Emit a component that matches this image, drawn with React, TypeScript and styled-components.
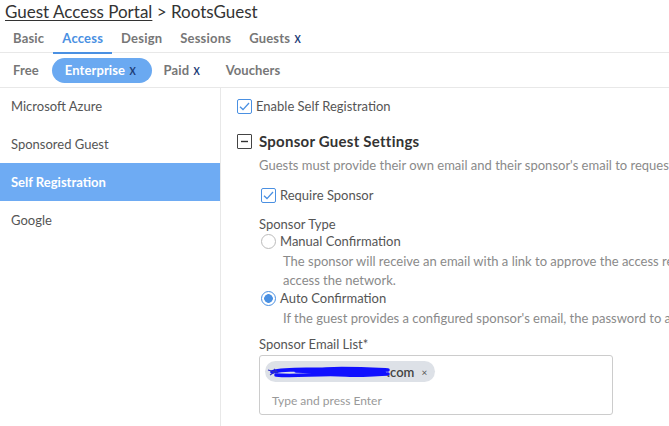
import React from "react";
import styled, { createGlobalStyle } from "styled-components";

const GlobalStyle = createGlobalStyle`
  html, body {
    margin: 0;
    padding: 0;
    background: #ffffff;
    font-family: Lato, "Open Sans", sans-serif;
    color: #444;
    overflow: hidden;
  }
`;

const primaryTabs = ["Basic", "Access", "Design", "Sessions", "Guests"];
const accessTabs = [
  { label: "Free", flagged: false },
  { label: "Enterprise", flagged: true },
  { label: "Paid", flagged: true },
  { label: "Vouchers", flagged: false },
];
const providers = ["Microsoft Azure", "Sponsored Guest", "Self Registration", "Google"];

const Check = () => (
  <svg width="11" height="9" viewBox="0 0 11 9">
    <path d="M1 4.8 L4 7.6 L10 1" fill="none" stroke="#4a90e2" strokeWidth="1.3" />
  </svg>
);

// redacted address, scribbled over in the screenshot
const Scribble = () => (
  <svg width="124" height="18" viewBox="0 0 124 18">
    <path
      d="M6 9 C20 5 40 7 60 6 C80 5 100 6 122 7 M10 12 C30 14 55 10 80 12 C95 13 110 11 122 11 M30 8 C55 9 85 8 118 9"
      fill="none"
      stroke="#1010ff"
      strokeWidth="3.6"
      strokeLinecap="round"
    />
    <path d="M2 7 L9 9 L4 12 M8 6 L12 10" fill="none" stroke="#2f2fc0" strokeWidth="1.1" />
  </svg>
);

export default function App() {
  return (
    <>
      <GlobalStyle />
      <Page>
        <Breadcrumb>
          <CrumbLink>Guest Access Portal</CrumbLink> &gt; RootsGuest
        </Breadcrumb>
        <TabBar>
          {primaryTabs.map((t) => (
            <Tab key={t} $active={t === "Access"}>
              {t}
              {t === "Guests" && <XMark>X</XMark>}
            </Tab>
          ))}
        </TabBar>
        <PillBar>
          {accessTabs.map((t) => (
            <Pill key={t.label} $active={t.label === "Enterprise"}>
              {t.label}
              {t.flagged && <XMark>X</XMark>}
            </Pill>
          ))}
        </PillBar>
        <Body>
          <Sidebar>
            {providers.map((p) => (
              <SideItem key={p} $active={p === "Self Registration"}>
                {p}
              </SideItem>
            ))}
          </Sidebar>
          <Content>
            <CheckRow>
              <CheckBox>
                <Check />
              </CheckBox>
              Enable Self Registration
            </CheckRow>
            <SectionHead>
              <Collapse>
                <svg width="11" height="11" viewBox="0 0 11 11">
                  <path d="M2 5.5 H9" stroke="#333" strokeWidth="1.4" />
                </svg>
              </Collapse>
              Sponsor Guest Settings
            </SectionHead>
            <Section>
              <Hint>Guests must provide their own email and their sponsor's email to request access.</Hint>
              <CheckRow $tight>
                <CheckBox>
                  <Check />
                </CheckBox>
                Require Sponsor
              </CheckRow>
              <FieldLabel>Sponsor Type</FieldLabel>
              <RadioRow>
                <Radio />
                Manual Confirmation
              </RadioRow>
              <RadioHint>
                The sponsor will receive an email with a link to approve the access request before the guest can
                access the network.
              </RadioHint>
              <RadioRow>
                <Radio $checked />
                Auto Confirmation
              </RadioRow>
              <RadioHint>
                If the guest provides a configured sponsor's email, the password to access the network is sent.
              </RadioHint>
              <FieldLabel $gap>Sponsor Email List*</FieldLabel>
              <TagInput>
                <Chip>
                  <Scribble />
                  <ChipText>.com</ChipText>
                  <ChipClose>×</ChipClose>
                </Chip>
                <Placeholder>Type and press Enter</Placeholder>
              </TagInput>
            </Section>
          </Content>
        </Body>
      </Page>
    </>
  );
}

const Page = styled.div`
  width: 669px;
  height: 426px;
  display: flex;
  flex-direction: column;
`;

const Breadcrumb = styled.div`
  font-size: 17px;
  color: #333;
  padding: 2px 0 0 5px;
  height: 22px;
  line-height: 20px;
`;

const CrumbLink = styled.span`
  text-decoration: underline;
  text-underline-offset: 2px;
  text-decoration-thickness: 1px;
`;

const TabBar = styled.div`
  display: flex;
  border-bottom: 1px solid #e8e8e8;
  height: 28px;
  padding-left: 4px;
`;

const Tab = styled.div<{ $active?: boolean }>`
  font-size: 13px;
  font-weight: 700;
  letter-spacing: 0.2px;
  color: ${(p) => (p.$active ? "#4a90e2" : "#777")};
  padding: 6px 9px 0;
  height: 22px;
  border-bottom: 2px solid ${(p) => (p.$active ? "#4a90e2" : "transparent")};
  margin-bottom: -1px;
  line-height: 16px;
`;

const XMark = styled.span`
  font-size: 11px;
  font-weight: 700;
  color: #1d3c78;
  margin-left: 4px;
  transform: scaleX(0.85);
  display: inline-block;
`;

const PillBar = styled.div`
  display: flex;
  align-items: center;
  padding-left: 1px;
  height: 34px;
  border-bottom: 1px solid #e8e8e8;
`;

const Pill = styled.div<{ $active?: boolean }>`
  font-size: 13px;
  font-weight: 700;
  letter-spacing: 0.1px;
  color: ${(p) => (p.$active ? "#ffffff" : "#777")};
  background: ${(p) => (p.$active ? "#6aa9f1" : "transparent")};
  border-radius: 13px;
  padding: ${(p) => (p.$active ? "0 15px 0 13px" : "0 13px 0 12px")};
  height: 25px;
  line-height: 25px;
`;

const Body = styled.div`
  display: flex;
  flex: 1;
  min-height: 0;
`;

const Sidebar = styled.div`
  width: 220px;
  border-right: 1px solid #e8e8e8;
  flex-shrink: 0;
`;

const SideItem = styled.div<{ $active?: boolean }>`
  height: 38px;
  line-height: 38px;
  padding-left: 11px;
  font-size: 13px;
  font-weight: ${(p) => (p.$active ? 700 : 400)};
  color: ${(p) => (p.$active ? "#ffffff" : "#555")};
  background: ${(p) => (p.$active ? "#6eabf3" : "transparent")};
  &:first-child {
    height: 37px;
    line-height: 37px;
  }
`;

const Content = styled.div`
  flex: 1;
  padding: 10px 0 0 16px;
  white-space: nowrap;
  overflow: hidden;
`;

const CheckRow = styled.div<{ $tight?: boolean }>`
  display: flex;
  align-items: center;
  gap: 4px;
  font-size: 13px;
  color: #555;
  margin: ${(p) => (p.$tight ? "0 0 0 2px" : "0")};
  height: 16px;
`;

const CheckBox = styled.span`
  width: 13px;
  height: 13px;
  border: 1px solid #4a90e2;
  border-radius: 2px;
  display: inline-flex;
  align-items: center;
  justify-content: center;
  flex-shrink: 0;
`;

const SectionHead = styled.div`
  display: flex;
  align-items: center;
  gap: 7px;
  font-size: 15px;
  font-weight: 700;
  letter-spacing: 0.25px;
  color: #333;
  margin-top: 18px;
  height: 18px;
`;

const Collapse = styled.span`
  width: 13px;
  height: 13px;
  border: 1px solid #444;
  border-radius: 1px;
  display: inline-flex;
  align-items: center;
  justify-content: center;
`;

const Section = styled.div`
  padding-left: 22px;
`;

const Hint = styled.div`
  font-size: 13px;
  color: #8a8a8a;
  margin: 7px 0 14px;
  line-height: 16px;
`;

const FieldLabel = styled.div<{ $gap?: boolean }>`
  font-size: 13px;
  color: #555;
  margin-top: ${(p) => (p.$gap ? "9px" : "13px")};
  line-height: 16px;
`;

const RadioRow = styled.div`
  display: flex;
  align-items: center;
  gap: 4px;
  font-size: 13px;
  color: #555;
  padding-left: 2px;
  margin-top: 1px;
  height: 16px;
`;

const Radio = styled.span<{ $checked?: boolean }>`
  width: 13px;
  height: 13px;
  border-radius: 50%;
  border: 1px solid ${(p) => (p.$checked ? "#4a90e2" : "#bbb")};
  background: ${(p) =>
    p.$checked ? "radial-gradient(circle, #4a90e2 0 4px, #fff 4.6px)" : "#fff"};
  flex-shrink: 0;
`;

const RadioHint = styled.div`
  font-size: 13px;
  color: #8a8a8a;
  padding-left: 24px;
  line-height: 19px;
  white-space: normal;
  width: 560px;
  margin: 3px 0 -1px;
`;

const TagInput = styled.div`
  width: 354px;
  height: 60px;
  border: 1px solid #ccc;
  border-radius: 3px;
  margin-top: 3px;
  padding: 5px 5px;
  box-sizing: border-box;
`;

const Chip = styled.div`
  display: inline-flex;
  align-items: center;
  height: 21px;
  border-radius: 11px;
  background: #dde1e7;
  padding: 0 8px 0 1px;
`;

const ChipText = styled.span`
  font-size: 13px;
  font-weight: 600;
  color: #444;
  margin-left: -3px;
`;

const ChipClose = styled.span`
  font-size: 10px;
  color: #555;
  margin-left: 7px;
`;

const Placeholder = styled.div`
  font-size: 12px;
  color: #999;
  margin: 9px 0 0 7px;
`;
